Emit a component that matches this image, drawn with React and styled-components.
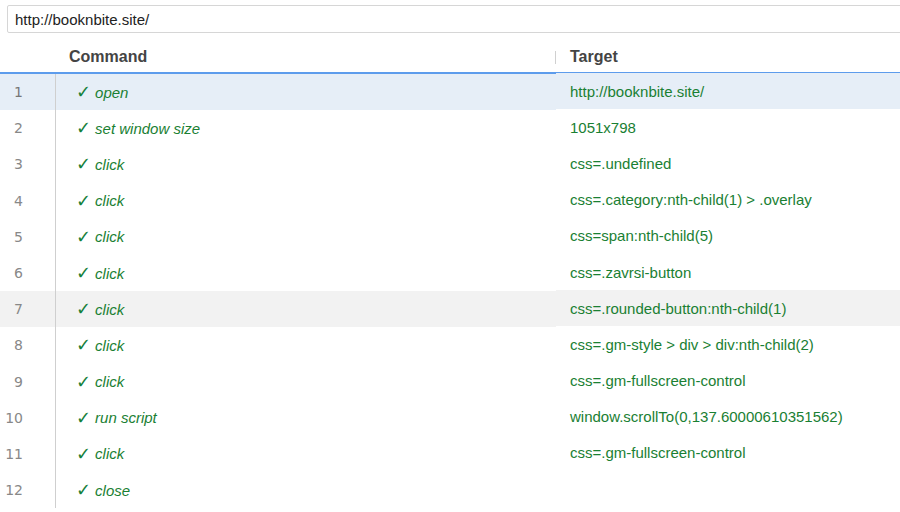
import React from 'react';
import styled, { createGlobalStyle } from 'styled-components';

const GlobalStyle = createGlobalStyle`
  html, body {
    margin: 0;
    padding: 0;
    background: #fff;
    font-family: "Liberation Sans", Arial, sans-serif;
    overflow: hidden;
  }
`;

const Page = styled.div`
  width: 900px;
  height: 512px;
  overflow: hidden;
  display: flex;
  flex-direction: column;
`;

const UrlBar = styled.div`
  padding: 5px 0 0 7px;
`;

const UrlInput = styled.div`
  height: 26px;
  width: 910px;
  border: 1px solid #d6d6d6;
  border-radius: 2px;
  box-sizing: content-box;
  display: flex;
  align-items: center;
  padding-left: 7px;
  font-size: 15px;
  color: #222;
`;

const Grid = styled.div`
  display: grid;
  grid-template-columns: 56px 500px 1fr;
`;

const HeaderRow = styled.div`
  display: contents;
`;

const HeadCell = styled.div`
  height: 41px;
  box-sizing: border-box;
  padding-bottom: 6px;
  border-bottom: 2px solid #5d9cec;
  display: flex;
  align-items: flex-end;
  font-size: 16px;
  font-weight: bold;
  color: #444;
  padding-left: ${p => p.$pad || 0}px;
  position: relative;
  ${p => p.$divider && `
    &::before {
      content: '';
      position: absolute;
      left: -1px;
      top: 18px;
      height: 13px;
      width: 1px;
      background: #d0d0d0;
    }
  `}
`;

const Row = styled.div`
  display: contents;
  & > div {
    background: ${p => (p.$selected ? '#e6eef7' : p.$hover ? '#f2f2f2' : '#fff')};
  }
`;

const NumCell = styled.div`
  height: 36.2px;
  display: flex;
  align-items: center;
  justify-content: flex-end;
  padding-right: 32px;
  border-right: 1px solid #cfcfcf;
  font-family: "DejaVu Sans", sans-serif;
  font-size: 14px;
  color: ${p => (p.$selected ? '#777' : '#888')};
`;

const CommandCell = styled.div`
  height: 36.2px;
  display: flex;
  align-items: center;
  padding-left: 20px;
  font-size: 15px;
  font-style: italic;
  color: #1a8033;
`;

const Check = styled.span`
  font-style: normal;
  font-weight: bold;
  font-family: "DejaVu Sans", sans-serif;
  font-size: 18px;
  line-height: 1;
  margin-right: 4px;
  color: #15803a;
`;

const TargetCell = styled.div`
  height: 36.2px;
  display: flex;
  align-items: center;
  padding-left: 14px;
  font-size: 15px;
  color: #1a8033;
  white-space: nowrap;
  transform: translateY(-1px);
`;

const commands = [
  { cmd: 'open', target: 'http://booknbite.site/' },
  { cmd: 'set window size', target: '1051x798' },
  { cmd: 'click', target: 'css=.undefined' },
  { cmd: 'click', target: 'css=.category:nth-child(1) > .overlay' },
  { cmd: 'click', target: 'css=span:nth-child(5)' },
  { cmd: 'click', target: 'css=.zavrsi-button' },
  { cmd: 'click', target: 'css=.rounded-button:nth-child(1)' },
  { cmd: 'click', target: 'css=.gm-style > div > div:nth-child(2)' },
  { cmd: 'click', target: 'css=.gm-fullscreen-control' },
  { cmd: 'run script', target: 'window.scrollTo(0,137.60000610351562)' },
  { cmd: 'click', target: 'css=.gm-fullscreen-control' },
  { cmd: 'close', target: '' },
];

function App() {
  return (
    <Page>
      <GlobalStyle />
      <UrlBar>
        <UrlInput>http://booknbite.site/</UrlInput>
      </UrlBar>
      <Grid>
        <HeaderRow>
          <HeadCell />
          <HeadCell $pad={13}>Command</HeadCell>
          <HeadCell $pad={14} $divider>Target</HeadCell>
        </HeaderRow>
        {commands.map((c, i) => (
          <Row key={i} $selected={i === 0} $hover={i === 6}>
            <NumCell $selected={i === 0}>{i + 1}</NumCell>
            <CommandCell>
              <Check>✓</Check>
              {c.cmd}
            </CommandCell>
            <TargetCell>{c.target}</TargetCell>
          </Row>
        ))}
      </Grid>
    </Page>
  );
}

export default App;
